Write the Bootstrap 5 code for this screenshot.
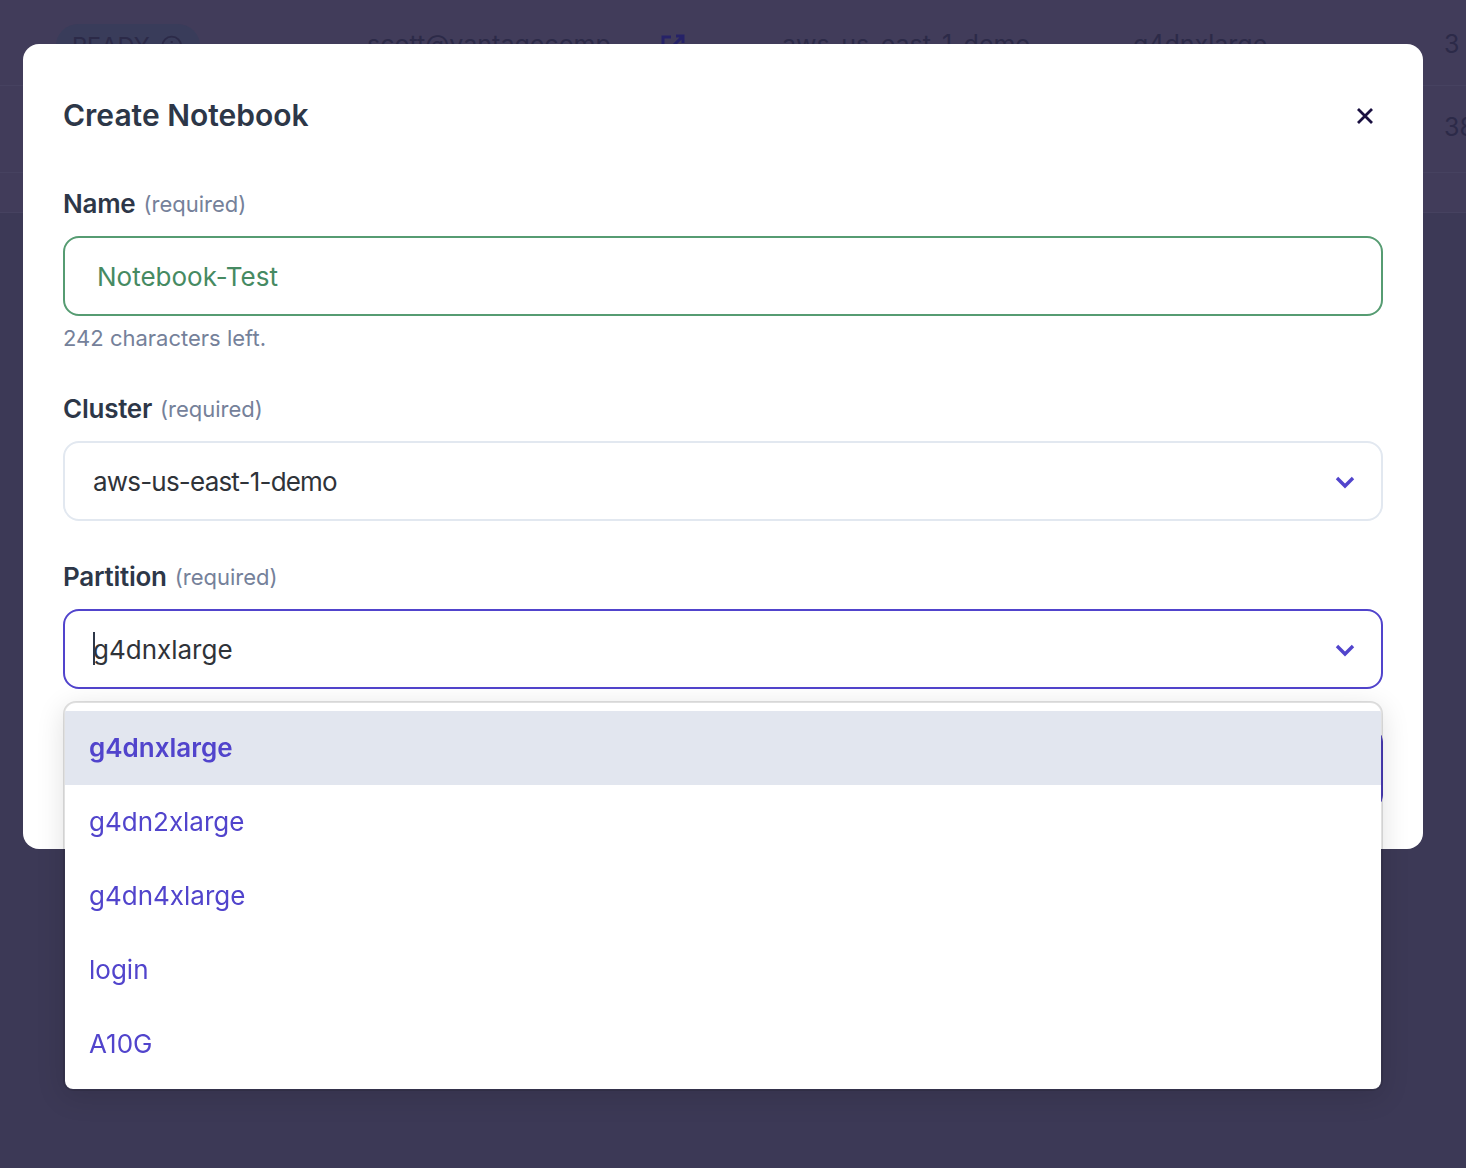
<!DOCTYPE html>
<html lang="en">
<head>
<meta charset="utf-8">
<title>Create Notebook</title>
<link href="https://cdn.jsdelivr.net/npm/bootstrap@5.3.0/dist/css/bootstrap.min.css" rel="stylesheet">
<style>
html,body{height:100%;overflow:hidden}
body{background:#3c3956;font-family:Inter,"Liberation Sans",sans-serif;color:#2d3748}
.behind{background:#413c5a;height:213px;overflow:hidden;color:#2c2a48;font-size:25px}
.behind-row{height:86px;border-bottom:1px solid #464260;position:relative}
.behind-row.second{height:87px}
.behind-strip{height:40px;border-bottom:1px solid #464260}
.behind-row>*{position:absolute;top:26px;line-height:36px;white-space:nowrap}
.ready-pill{left:56px;top:24px!important;height:44px;width:144px;border-radius:22px;background:#393c5a;padding:2px 18px 2px 16px;display:flex;gap:11px;align-items:center;line-height:1;font-size:23.5px}
.overlay{position:fixed;inset:0;padding:44px 43px 0 23px}
.sheet.modal-content{width:1400px;background:#fff;border:0;border-radius:16px;padding:48px 40px 38px}
.sheet-head{height:46px;margin-bottom:50px;padding:0}
.sheet-title{font-size:30px;font-weight:600;color:#2d3748;margin:0;line-height:46px}
.close-x{background:none;border:0;padding:2px 0 0;width:40px;margin-right:-2px;height:40px;display:flex;align-items:center;justify-content:center;color:#1a1040}
.field-label{display:flex;align-items:baseline;gap:8px;height:32px;margin:0 0 16px;line-height:32px;font-size:26px;font-weight:600;color:#2d3748;letter-spacing:-.25px}
.field-label small{font-size:22px;font-weight:400;color:#75819a;letter-spacing:0;position:relative;top:-1px}
.field-box.form-control{height:80px;border:2px solid #e2e8f0;border-radius:16px;padding:2px 28px 0;font-size:26px;color:#2f3339;display:flex;align-items:center;justify-content:space-between;box-shadow:none;background:#fff;line-height:1;position:relative}
.field-box.is-ok{border-color:#569c72;color:#468a62;padding-left:32px}
.field-box.is-open{border-color:#5144cc}
.field-hint{font-size:22px;line-height:28px;margin-top:8px;color:#75819a}
.gap-a{margin-top:41px}.gap-b{margin-top:40px}
.tight-text{letter-spacing:-.8px}
.caret-bar{position:absolute;left:28px;top:21px;width:2px;height:33px;background:#2d3748}
.chev{width:20px;height:14px;margin-right:-2px;color:#5144cc;flex:none}
.sheet-foot{margin-top:37px;display:flex;justify-content:flex-end}
.sheet-foot .btn{height:85px;width:240px;border-radius:16px;background:#4f40c4;border-color:#4f40c4;font-size:26px}
.pick-list.dropdown-menu{display:block;position:absolute;left:0;right:0;top:calc(100% + 12px);padding:8px 0;margin:0;border:2px solid rgba(0,0,0,.12);background-clip:padding-box;border-radius:13px 13px 10px 10px;box-shadow:0 6px 28px rgba(0,0,0,.12);background-color:#fff;width:auto;min-width:0;overflow:hidden}
.pick-list .dropdown-item{height:74px;padding:0 24px 2px;display:flex;align-items:center;font-size:26px;color:#5144cc;background:none}
.pick-list .dropdown-item.is-current{background:#e2e6ef;font-weight:600;color:#5144cc}
</style>
</head>
<body>
<div class="behind">
  <div class="behind-row">
    <span class="ready-pill">READY
      <svg width="24" height="24" viewBox="0 0 24 24" fill="none" stroke="currentColor" stroke-width="2.2"><circle cx="12" cy="12" r="10.5"/><path d="M12 6.5v2M12 11v7"/></svg>
    </span>
    <span style="left:367px">scott@vantagecomp</span>
    <svg style="left:661px;top:34px;position:absolute" width="24" height="24" viewBox="0 0 24 24" fill="none" stroke="#262268" stroke-width="3"><path d="M10 3H2v19h19v-8M13 11l9-9M15 2h7v7"/></svg>
    <span style="left:782px">aws-us-east-1-demo</span>
    <span style="left:1133px">g4dnxlarge</span>
    <span style="left:1444px">3</span>
  </div>
  <div class="behind-row second"><span style="left:1444px;top:23px">38</span></div>
  <div class="behind-strip"></div>
</div>

<div class="overlay">
  <div class="modal-content sheet">
    <div class="modal-header sheet-head border-0 justify-content-between">
      <h5 class="modal-title sheet-title">Create Notebook</h5>
      <button class="close-x" type="button" aria-label="Close">
        <svg width="18" height="18" viewBox="0 0 18 18" fill="none" stroke="currentColor" stroke-width="2.8"><path d="M2 2l14 14M16 2L2 16"/></svg>
      </button>
    </div>
    <div>
      <label class="field-label">Name <small>(required)</small></label>
      <div class="form-control field-box is-ok">Notebook-Test</div>
      <div class="field-hint">242 characters left.</div>
    </div>
    <div class="gap-a">
      <label class="field-label">Cluster <small>(required)</small></label>
      <div class="form-control field-box"><span class="tight-text">aws-us-east-1-demo</span>
        <svg class="chev" viewBox="0 0 20 14" fill="none" stroke="currentColor" stroke-width="3.4"><path d="M2 3l8 8 8-8"/></svg>
      </div>
    </div>
    <div class="gap-b">
      <label class="field-label">Partition <small>(required)</small></label>
      <div class="position-relative">
        <div class="form-control field-box is-open"><span class="caret-bar"></span><span>g4dnxlarge</span>
          <svg class="chev" viewBox="0 0 20 14" fill="none" stroke="currentColor" stroke-width="3.4"><path d="M2 3l8 8 8-8"/></svg>
        </div>
        <div class="dropdown-menu pick-list">
          <a class="dropdown-item is-current" href="#">g4dnxlarge</a>
          <a class="dropdown-item" href="#">g4dn2xlarge</a>
          <a class="dropdown-item" href="#">g4dn4xlarge</a>
          <a class="dropdown-item" href="#">login</a>
          <a class="dropdown-item" href="#">A10G</a>
        </div>
      </div>
    </div>
    <div class="sheet-foot"><button class="btn btn-primary" type="button">Create</button></div>
  </div>
</div>
<script src="https://cdn.jsdelivr.net/npm/bootstrap@5.3.0/dist/js/bootstrap.bundle.min.js"></script>
</body>
</html>
